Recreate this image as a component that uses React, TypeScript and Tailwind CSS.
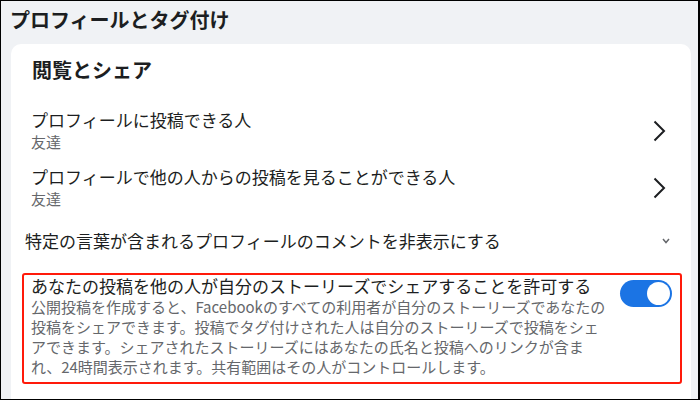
const rows = [
  { title: 'プロフィールに投稿できる人', value: '友達' },
  { title: 'プロフィールで他の人からの投稿を見ることができる人', value: '友達' },
];

function ChevronRight() {
  return (
    <svg width="13" height="22" viewBox="0 0 13 22" fill="none">
      <polyline points="1.5,1.5 11,11 1.5,20.5" stroke="#1c1e21" strokeWidth="2" />
    </svg>
  );
}

export default function App() {
  return (
    <div className="w-[700px] h-[400px] overflow-hidden bg-[#f0f2f5] border border-black border-r-2 font-['Noto_Sans_CJK_JP',sans-serif] text-[#1c1e21]">
      <h1 className="pl-[9px] pt-[5px] text-[20px] leading-[28px] font-bold">プロフィールとタグ付け</h1>

      <div className="mt-[10px] ml-[10px] mr-[7px] h-[400px] rounded-t-[10px] bg-white pt-[12px]">
        <h2 className="pl-[21px] text-[20px] leading-[28px] font-bold">閲覧とシェア</h2>

        <div className="mt-[25px] flex flex-col gap-[14px]">
          {rows.map((row) => (
            <div key={row.title} className="flex items-center justify-between pl-[20px] pr-[25px]">
              <div>
                <p className="text-[17px] leading-[22px]">{row.title}</p>
                <p className="text-[15px] leading-[21px] text-[#65676b]">{row.value}</p>
              </div>
              <ChevronRight />
            </div>
          ))}
        </div>

        <div className="mt-[21px] flex items-center justify-between pl-[14px] pr-[21px]">
          <p className="text-[17px] leading-[22px]">特定の言葉が含まれるプロフィールのコメントを非表示にする</p>
          <svg width="8" height="6" viewBox="0 0 8 6" fill="none">
            <polyline points="1,1 4,4.5 7,1" stroke="#65676b" strokeWidth="1.5" />
          </svg>
        </div>

        <div className="mt-[21px] ml-[11px] mr-[9px] flex justify-between rounded-[3px] border-2 border-[#ff1a0a] pl-[7px] pr-[8px] pb-[5px]">
          <div className="w-[580px]">
            <p className="text-[17px] leading-[22px]">あなたの投稿を他の人が自分のストーリーズでシェアすることを許可する</p>
            <p className="text-[15px] leading-[20px] text-[#65676b]">
              公開投稿を作成すると、Facebookのすべての利用者が自分のストーリーズであなたの投稿をシェアできます。投稿でタグ付けされた人は自分のストーリーズで投稿をシェアできます。シェアされたストーリーズにはあなたの氏名と投稿へのリンクが含まれ、24時間表示されます。共有範囲はその人がコントロールします。
            </p>
          </div>
          <div className="mt-[5px] flex h-[27px] w-[52px] shrink-0 items-center justify-end rounded-full bg-[#1b74e4] pr-[2px]">
            <div className="h-[23px] w-[23px] rounded-full bg-white" />
          </div>
        </div>
      </div>
    </div>
  );
}
